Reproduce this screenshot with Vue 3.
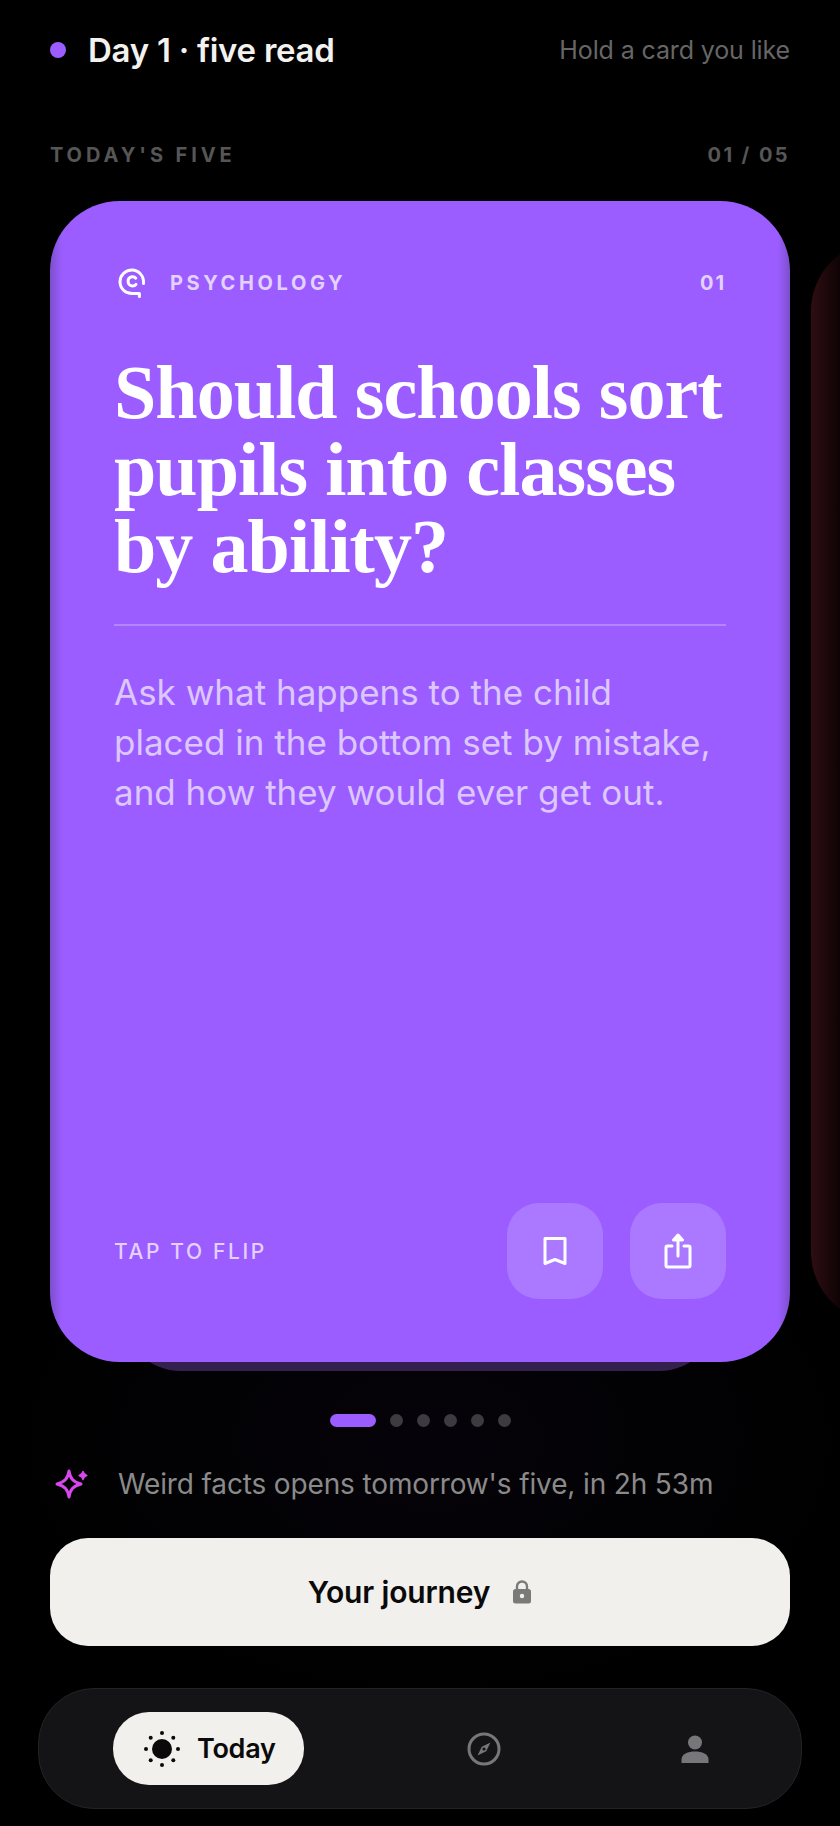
<template>
  <div class="screen">
    <header class="topbar">
      <div class="topbar-left">
        <span class="status-dot"></span>
        <span class="day">Day 1 · five read</span>
      </div>
      <span class="hold">Hold a card you like</span>
    </header>

    <div class="section-row">
      <span>TODAY'S FIVE</span>
      <span class="counter">01 / 05</span>
    </div>

    <div class="carousel">
      <article class="card">
        <div class="card-under"></div>
        <div class="card-face">
          <div class="card-head">
            <svg class="topic-icon" viewBox="0 0 28 30" fill="none" stroke="#fff" stroke-width="3" stroke-linecap="round" stroke-linejoin="round">
              <path d="M25.500 15.500C26.200 8.500 21 2 14 2 7.200 2 2 7.300 2 13.800 2 20.500 7.500 25.600 14 25.600h7.400v2.800" />
              <path d="M17.800 10.200C16.800 9 15.500 8.600 14 8.800c-2.400.4-4 2.400-3.900 4.800.1 2.500 2 4.400 4.500 4.400 1.400 0 2.600-.5 3.400-1.600" />
            </svg>
            <span class="topic">PSYCHOLOGY</span>
            <span class="card-num">01</span>
          </div>
          <h1 class="question">Should schools sort pupils into classes by ability?</h1>
          <div class="divider"></div>
          <p class="prompt">Ask what happens to the child placed in the bottom set by mistake, and how they would ever get out.</p>
          <div class="card-foot">
            <span class="flip">TAP TO FLIP</span>
            <div class="actions">
              <button class="action">
                <svg width="26" height="30" viewBox="0 0 26 30" fill="none" stroke="#fff" stroke-width="3" stroke-linejoin="round">
                  <path d="M3 2.500h20v25l-10-4-10 4z" />
                </svg>
              </button>
              <button class="action">
                <svg width="28" height="36" viewBox="0 0 28 36" fill="none" stroke="#fff" stroke-width="3" stroke-linecap="round" stroke-linejoin="round">
                  <path d="M8 13H3.500a1.500 1.500 0 0 0-1.500 1.500v18A1.500 1.500 0 0 0 3.500 34h21a1.500 1.500 0 0 0 1.500-1.500v-18A1.500 1.500 0 0 0 24.500 13H20" />
                  <path d="M14 23V3" />
                  <path d="M9.500 7 14 2l4.500 5z" fill="#fff" />
                </svg>
              </button>
            </div>
          </div>
        </div>
      </article>
      <div class="next-card"></div>
    </div>

    <div class="dots">
      <span class="dot active"></span>
      <span v-for="n in 5" :key="n" class="dot"></span>
    </div>

    <div class="hint">
      <svg class="sparkle" width="36" height="30" viewBox="0 0 36 30" fill="none" stroke="#d946ef" stroke-width="3" stroke-linejoin="round">
        <path d="M15 2C16.200 9.500 19 12.800 27 15 19 17.200 16.200 20.500 15 28 13.800 20.500 11 17.200 3 15 11 12.800 13.800 9.500 15 2z" />
        <path d="M29 2.500c.5 2.300 1.300 3.300 3.800 4-2.500.7-3.300 1.700-3.800 4-.5-2.300-1.300-3.300-3.800-4 2.500-.7 3.300-1.700 3.800-4z" fill="#d946ef" stroke-width="1.500" />
      </svg>
      <span>Weird facts opens tomorrow's five, in 2h 53m</span>
    </div>

    <button class="journey">
      <span>Your journey</span>
      <svg width="20" height="24" viewBox="0 0 20 24">
        <path d="M5 10V6.500a5 5 0 0 1 10 0V10" fill="none" stroke="#7a7a78" stroke-width="2.400" />
        <rect x="1" y="9" width="18" height="14.500" rx="2.500" fill="#7a7a78" />
        <circle cx="10" cy="16" r="2.200" fill="#f1f0ec" />
      </svg>
    </button>

    <nav class="tabs">
      <button class="tab-active">
        <svg width="38" height="38" viewBox="0 0 38 38" fill="#0a0a0a">
          <circle cx="19" cy="19" r="10" />
          <circle cx="19" cy="3" r="2" />
          <circle cx="19" cy="35" r="2" />
          <circle cx="3" cy="19" r="2" />
          <circle cx="35" cy="19" r="2" />
          <circle cx="7.700" cy="7.700" r="2" />
          <circle cx="30.300" cy="7.700" r="2" />
          <circle cx="7.700" cy="30.300" r="2" />
          <circle cx="30.300" cy="30.300" r="2" />
        </svg>
        <span>Today</span>
      </button>
      <button class="tab compass">
        <svg width="34" height="34" viewBox="0 0 34 34">
          <circle cx="17" cy="17" r="15" fill="none" stroke="#77777b" stroke-width="3" />
          <path d="M23.500 10.500 19.200 19.200 10.500 23.500 14.800 14.800z" fill="#77777b" />
          <circle cx="17" cy="17" r="1.600" fill="#141416" />
        </svg>
      </button>
      <button class="tab person">
        <svg width="30" height="28" viewBox="0 0 30 28" fill="#77777b">
          <circle cx="15" cy="7.500" r="7" />
          <path d="M1.500 28v-3.500C1.500 19 8 16.500 15 16.500s13.500 2.500 13.500 8V28z" />
        </svg>
      </button>
    </nav>
  </div>
</template>

<script setup>
</script>

<style>
html, body {
  background: #000;
}
</style>

<style scoped>
.screen {
  position: relative;
  width: 840px;
  height: 1826px;
  overflow: hidden;
  box-sizing: border-box;
  padding-top: 27px;
  background:
    radial-gradient(ellipse 420px 260px at 430px 1440px, rgba(70, 40, 120, 0.08), transparent),
    #000;
  font-family: Inter, "Open Sans", sans-serif;
  color: #f3f2ee;
}
button {
  border: none;
  font-family: inherit;
  padding: 0;
}

.topbar {
  display: flex;
  align-items: center;
  justify-content: space-between;
  height: 46px;
  padding: 0 50px;
}
.topbar-left {
  display: flex;
  align-items: center;
  gap: 22px;
}
.status-dot {
  width: 16px;
  height: 16px;
  border-radius: 50%;
  background: #9b5dff;
}
.day {
  font-size: 33px;
  font-weight: 600;
  letter-spacing: -0.008em;
}
.hold {
  font-size: 25px;
  color: #666;
  letter-spacing: -0.005em;
}

.section-row {
  display: flex;
  justify-content: space-between;
  margin-top: 70px;
  padding: 0 50px;
  font-size: 20px;
  line-height: 24px;
  font-weight: 700;
  letter-spacing: 0.195em;
  color: #565656;
}
.counter {
  letter-spacing: 0.12em;
}

.carousel {
  display: flex;
  align-items: center;
  gap: 21px;
  margin-top: 34px;
  padding-left: 50px;
  height: 1161px;
}
.card {
  position: relative;
  flex: none;
  width: 740px;
  height: 1161px;
}
.card-under {
  position: absolute;
  left: 75px;
  right: 75px;
  bottom: -9px;
  height: 100px;
  border-radius: 0 0 55px 55px;
  background: #34204f;
}
.card-face {
  position: relative;
  display: flex;
  flex-direction: column;
  box-sizing: border-box;
  height: 100%;
  padding: 66px 64px 63px;
  border-radius: 70px;
  background: linear-gradient(90deg, #7d4fcb 0, #9b5dff 12px, #9b5dff calc(100% - 12px), #7d4fcb 100%);
}
.next-card {
  flex: none;
  width: 740px;
  height: 1081px;
  border-radius: 70px;
  background: linear-gradient(90deg, #2e0d12 0, #0d0304 30px);
}

.card-head {
  display: flex;
  align-items: center;
  height: 32px;
}
.topic-icon {
  width: 28px;
  height: 30px;
  margin-left: 4px;
}
.topic {
  margin-left: 24px;
  font-size: 20px;
  font-weight: 700;
  letter-spacing: 0.18em;
  color: #e3d1ff;
}
.card-num {
  margin-left: auto;
  font-size: 20px;
  font-weight: 700;
  letter-spacing: 0.1em;
  color: #e3d1ff;
}
.question {
  margin: 55px 0 0;
  font-family: "Liberation Serif", serif;
  font-size: 76px;
  line-height: 77px;
  font-weight: 700;
  letter-spacing: -0.012em;
  color: #fff;
}
.divider {
  height: 2px;
  margin-top: 39px;
  background: rgba(255, 255, 255, 0.25);
}
.prompt {
  max-width: 606px;
  margin: 41px 0 0;
  font-size: 35px;
  line-height: 50px;
  color: #dcc7ff;
}
.card-foot {
  display: flex;
  align-items: center;
  justify-content: space-between;
  margin-top: auto;
}
.flip {
  font-size: 21px;
  font-weight: 500;
  letter-spacing: 0.125em;
  color: #e3d1ff;
}
.actions {
  display: flex;
  gap: 27px;
}
.action {
  display: flex;
  align-items: center;
  justify-content: center;
  width: 96px;
  height: 96px;
  border-radius: 32px;
  background: #ab79ff;
}

.dots {
  display: flex;
  align-items: center;
  justify-content: center;
  gap: 14px;
  margin-top: 52px;
  height: 13px;
}
.dot {
  width: 13px;
  height: 13px;
  border-radius: 50%;
  background: #3c3b40;
}
.dot.active {
  width: 46px;
  border-radius: 7px;
  background: #9b5dff;
}

.hint {
  display: flex;
  align-items: center;
  margin-top: 39px;
  padding-left: 54px;
  height: 36px;
  font-size: 28px;
  letter-spacing: -0.005em;
  color: #8a8a8a;
}
.sparkle {
  flex: none;
  margin-right: 28px;
}

.journey {
  display: flex;
  align-items: center;
  justify-content: center;
  gap: 22px;
  width: 740px;
  height: 108px;
  margin: 36px 50px 0;
  border-radius: 38px;
  background: #f1f0ec;
  color: #0a0a0a;
  font-size: 30px;
  font-weight: 600;
  letter-spacing: -0.005em;
}

.tabs {
  display: flex;
  align-items: center;
  justify-content: space-between;
  box-sizing: border-box;
  width: 764px;
  height: 121px;
  margin: 42px 38px 0;
  padding: 0 74px;
  border: 1px solid #232325;
  border-radius: 56px;
  background: #141416;
}
.tab-active {
  display: flex;
  align-items: center;
  gap: 16px;
  box-sizing: border-box;
  width: 191px;
  height: 73px;
  padding-left: 30px;
  border-radius: 36px;
  background: #f1f0ec;
  color: #0a0a0a;
  font-size: 27px;
  font-weight: 600;
  letter-spacing: -0.01em;
}
.tab {
  display: flex;
  align-items: center;
  justify-content: center;
  background: none;
}
.compass {
  width: 48px;
}
.person {
  width: 64px;
}
</style>
